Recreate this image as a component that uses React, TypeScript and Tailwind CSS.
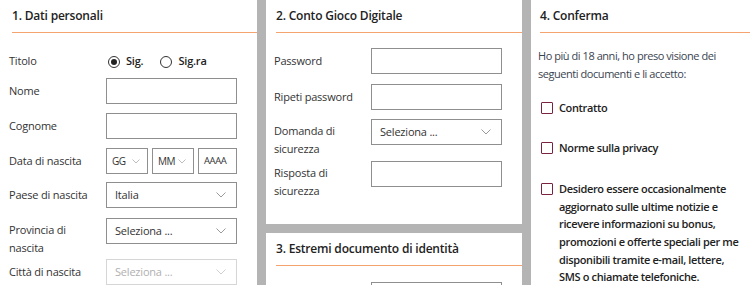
import React from "react";

const font = { fontFamily: '"Open Sans", "Noto Sans", sans-serif' };

function Chevron({ light, small }: { light?: boolean; small?: boolean }) {
  return small ? (
    <svg width="8" height="5" viewBox="0 0 8 5" className="shrink-0">
      <path d="M0.5 0.5 L4 4 L7.5 0.5" fill="none" stroke="#bdbdbd" strokeWidth="1" />
    </svg>
  ) : (
    <svg width="10" height="6" viewBox="0 0 10 6" className="shrink-0">
      <path d="M0.5 0.5 L5 5 L9.5 0.5" fill="none" stroke={light ? "#cfcfcf" : "#9a9a9a"} strokeWidth="1" />
    </svg>
  );
}

function Input({ w = "w-[131px]" }: { w?: string }) {
  return <div className={`${w} h-[26px] border border-[#8f8f8f] bg-white shrink-0`} />;
}

function Select({ text, w = "w-[131px]", disabled, small }: { text: string; w?: string; disabled?: boolean; small?: boolean }) {
  return (
    <div
      className={`${w} h-[26px] border ${disabled ? "border-[#d6d6d6] text-[#b0b0b0]" : "border-[#8f8f8f] text-[#333]"} bg-white shrink-0 flex items-center justify-between ${small ? "pl-[5px] pr-[7px] text-[10px] tracking-[-0.5px]" : "pl-[8px] pr-[10px] text-[11px]"}`}
    >
      <span>{text}</span>
      <Chevron light={disabled} small={small} />
    </div>
  );
}

function Header({ title }: { title: string }) {
  return (
    <div className="h-[33px] border-b border-[#f5a46f] flex items-center pb-[1px]">
      <span className="text-[12px] tracking-[-0.2px] font-semibold text-[#222]">{title}</span>
    </div>
  );
}

function Row({ label, children, mt, lines2 }: { label: React.ReactNode; children: React.ReactNode; mt: string; lines2?: boolean }) {
  return (
    <div className={`flex items-start ${mt}`}>
      <div className={`w-[97px] shrink-0 text-[11px] leading-[17.5px] text-[#333] ${lines2 ? "pt-[3px]" : "pt-[4px]"}`}>{label}</div>
      {children}
    </div>
  );
}

function Radio({ checked, label }: { checked?: boolean; label: string }) {
  return (
    <div className="flex items-center gap-[6px]">
      <div className="w-[12px] h-[12px] rounded-full border border-[#333] flex items-center justify-center bg-white">
        {checked && <div className="w-[6px] h-[6px] rounded-full bg-[#222]" />}
      </div>
      <span className="text-[11px] font-semibold text-[#222]">{label}</span>
    </div>
  );
}

function Checkbox({ children, mt }: { children: React.ReactNode; mt: string }) {
  return (
    <div className={`flex items-start ${mt}`}>
      <div className="w-[12px] h-[12px] border border-[#7a2340] rounded-[1px] shrink-0 mt-[3px] ml-[3px] bg-white" />
      <div className="ml-[6px] text-[11px] tracking-[-0.35px] font-semibold leading-[17.6px] text-[#222] whitespace-nowrap">{children}</div>
    </div>
  );
}

export default function App() {
  return (
    <div style={font} className="w-[750px] h-[285px] overflow-hidden bg-[#b4b4b4] flex gap-[9px] tracking-[-0.2px]">
      {/* Panel 1 */}
      <div className="w-[257px] shrink-0 bg-white self-stretch">
        <div className="pl-[12px]">
          <Header title="1. Dati personali" />
        </div>
        <div className="pl-[9px]">
          <div className="flex items-center mt-[20px] h-[17px]">
            <div className="w-[99px] shrink-0 text-[11px] text-[#333]">Titolo</div>
            <div className="flex items-center gap-[17px]">
              <Radio checked label="Sig." />
              <Radio label="Sig.ra" />
            </div>
          </div>
          <Row label="Nome" mt="mt-[8px]">
            <Input />
          </Row>
          <Row label="Cognome" mt="mt-[9px]">
            <Input />
          </Row>
          <Row label="Data di nascita" mt="mt-[9px]">
            <div className="flex gap-[4px]">
              <Select text="GG" w="w-[42px]" small />
              <Select text="MM" w="w-[42px]" small />
              <div className="w-[39px] h-[26px] border border-[#8f8f8f] flex items-center pl-[5px] text-[9.5px] tracking-[-0.4px] text-[#333]">AAAA</div>
            </div>
          </Row>
          <Row label="Paese di nascita" mt="mt-[8px]">
            <Select text="Italia" />
          </Row>
          <Row label={<>Provincia di<br />nascita</>} mt="mt-[10px]" lines2>
            <Select text="Seleziona ..." />
          </Row>
          <Row label="Città di nascita" mt="mt-[3px]">
            <Select text="Seleziona ..." disabled />
          </Row>
        </div>
      </div>

      {/* Column 2 */}
      <div className="w-[256px] shrink-0 flex flex-col gap-[9px]">
        <div className="bg-white h-[224px] shrink-0">
          <div className="pl-[10px]">
            <Header title="2. Conto Gioco Digitale" />
          </div>
          <div className="pl-[8px]">
            <Row label="Password" mt="mt-[15px]">
              <Input />
            </Row>
            <Row label="Ripeti password" mt="mt-[10px]">
              <Input />
            </Row>
            <Row label={<>Domanda di<br />sicurezza</>} mt="mt-[9px]" lines2>
              <Select text="Seleziona ..." />
            </Row>
            <Row label={<>Risposta di<br />sicurezza</>} mt="mt-[4px]" lines2>
              <Input />
            </Row>
          </div>
        </div>
        <div className="bg-white flex-1">
          <div className="pl-[10px]">
            <Header title="3. Estremi documento di identità" />
          </div>
          <div className="pl-[105px] mt-[16px]">
            <Input />
          </div>
        </div>
      </div>

      {/* Panel 4 */}
      <div className="flex-1 bg-white">
        <div className="pl-[9px]">
          <Header title="4. Conferma" />
        </div>
        <div className="pl-[7px] pr-[10px]">
          <p className="mt-[14px] text-[11px] leading-[18px] tracking-[-0.45px] text-[#3a4450]">
            Ho più di 18 anni, ho preso visione dei
            <br />
            seguenti documenti e li accetto:
          </p>
          <Checkbox mt="mt-[16px]">Contratto</Checkbox>
          <Checkbox mt="mt-[22px]">Norme sulla privacy</Checkbox>
          <Checkbox mt="mt-[24px]">
            Desidero essere occasionalmente
            <br />
            aggiornato sulle ultime notizie e
            <br />
            ricevere informazioni su bonus,
            <br />
            promozioni e offerte speciali per me
            <br />
            disponibili tramite e-mail, lettere,
            <br />
            SMS o chiamate telefoniche.
          </Checkbox>
        </div>
      </div>
    </div>
  );
}
